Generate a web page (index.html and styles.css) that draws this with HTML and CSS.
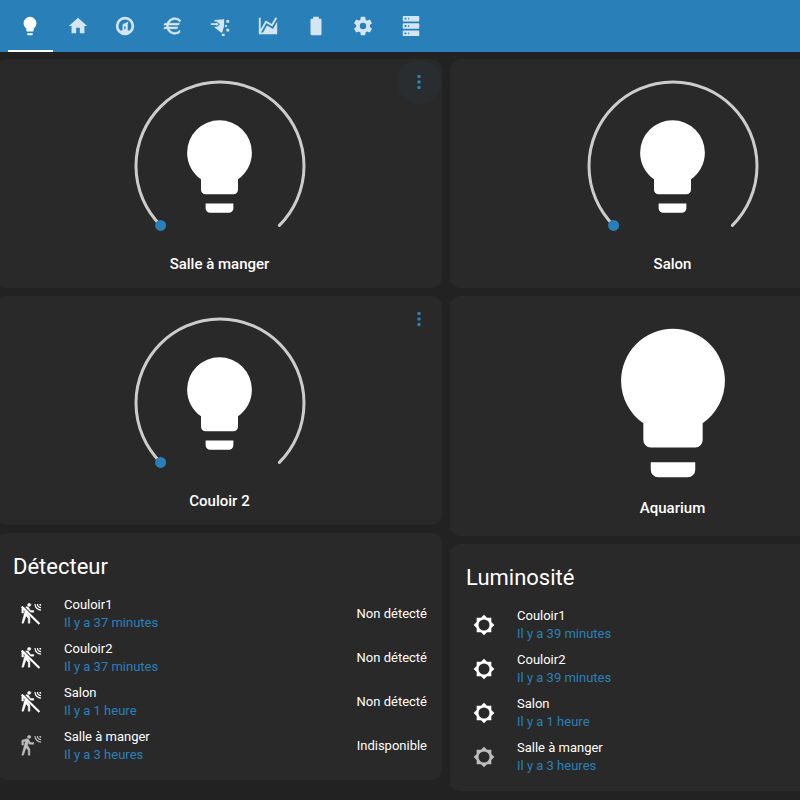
FILE: index.html
```
<!DOCTYPE html>
<html lang="fr">
<head>
<meta charset="utf-8">
<title>Maison</title>
<link rel="stylesheet" href="styles.css">
</head>
<body>
<svg class="defs" aria-hidden="true">
  <symbol id="bulb" viewBox="0 0 24 24"><path d="M12,2A7,7 0 0,0 5,9C5,11.38 6.19,13.47 8,14.74V17A1,1 0 0,0 9,18H15A1,1 0 0,0 16,17V14.74C17.81,13.47 19,11.38 19,9A7,7 0 0,0 12,2M9,21A1,1 0 0,0 10,22H14A1,1 0 0,0 15,21V20H9V21Z"/></symbol>
  <symbol id="dots" viewBox="0 0 24 24"><path d="M12,16A2,2 0 1,1 12,20A2,2 0 1,1 12,16M12,10A2,2 0 1,1 12,14A2,2 0 1,1 12,10M12,4A2,2 0 1,1 12,8A2,2 0 1,1 12,4Z"/></symbol>
  <symbol id="sun" viewBox="0 0 24 24"><path d="M12,18A6,6 0 0,1 6,12A6,6 0 0,1 12,6A6,6 0 0,1 18,12A6,6 0 0,1 12,18M20,15.31L23.31,12L20,8.69V4H15.31L12,0.69L8.69,4H4V8.69L0.69,12L4,15.31V20H8.69L12,23.31L15.31,20H20V15.31Z"/></symbol>
  <symbol id="motion" viewBox="0 0 24 24"><path class="walker" d="M10,0.2C9,0.2 8.2,1 8.2,2C8.2,3 9,3.8 10,3.8C11,3.8 11.8,3 11.8,2C11.8,1 11,0.2 10,0.2M7.92,4.03C7.75,4.03 7.58,4.06 7.42,4.11L2,5.8V11H3.8V7.33L5.91,6.67L2,22H3.8L6.67,13.89L9,17V22H10.8V15.59L8.31,11.05L9.04,8.18L10.12,10H15V8.2H11.38L9.38,4.87C9.08,4.37 8.54,4.03 7.92,4.03Z"/><path d="M15.67,1A7.33,7.33 0 0,0 23,8.33V7A6,6 0 0,1 17,1H15.67M18.33,1C18.33,3.58 20.42,5.67 23,5.67V4.33C21.16,4.33 19.67,2.84 19.67,1H18.33M21,1A2,2 0 0,0 23,3V1H21Z"/></symbol>
  <symbol id="motion-off" viewBox="0 0 24 24"><use href="#motion"/><path d="M3.4,2.2L22.4,20.9L21.6,21.7L2.6,3Z" class="gap"/><path d="M2.6,2.9L22,22.1L20.4,23.7L1,4.5Z"/></symbol>
  <symbol id="dial" viewBox="0 0 172 172"><path d="M26.6,145.4A84,84 0 1,1 145.4,145.4" class="arc"/><circle cx="26.6" cy="145.4" r="5.5" class="knob"/></symbol>
</svg>

<nav class="bar" aria-label="Vues">
  <div class="tabs">
    <a class="tab active" href="#lumieres" aria-label="Lumières" aria-current="page"><svg><use href="#bulb"/></svg></a>
    <a class="tab" href="#accueil" aria-label="Accueil"><svg viewBox="0 0 24 24"><path d="M10,20V14H14V20H19V12H22L12,3L2,12H5V20H10Z"/></svg></a>
    <a class="tab" href="#robot" aria-label="Aspirateur"><svg viewBox="0 0 24 24"><path fill-rule="evenodd" d="M12,2A10,10 0 1,1 12,22A10,10 0 1,1 12,2M12,5A7,7 0 0,0 7,16.9H9.3V12A3,3 0 0,1 12.6,9L15,7.4L15.6,8L14.8,10.6A3,3 0 0,1 15,12V16.9H17A7,7 0 0,0 12,5M11.2,12.2V15.5H12.6V12.2Z"/></svg></a>
    <a class="tab" href="#energie" aria-label="Énergie"><svg viewBox="0 0 24 24"><path class="bold" d="M7.07,11L7,12L7.07,13H17.35L16.5,15H7.67C8.8,17.36 11.21,19 14,19C16.23,19 18.22,17.96 19.5,16.33V19.12C18,20.3 16.07,21 14,21C10.08,21 6.75,18.5 5.5,15H2L3,13H5.05L5,12L5.05,11H2L3,9H5.5C6.75,5.5 10.08,3 14,3C16.5,3 18.8,4.04 20.43,5.71L19.57,7.75C18.29,6.08 16.27,5 14,5C11.21,5 8.8,6.64 7.67,9H19.04L18.19,11H7.07Z"/></svg></a>
    <a class="tab" href="#arrosage" aria-label="Arrosage"><svg viewBox="0 0 24 24"><path d="M6,5.5L16.5,4.5V12L14.5,19H13L5.5,13L9.5,12.5L12,10L8.5,7H6ZM2,9H8.2V8L10.5,10L8.2,12V11H2ZM19,5.5H22V8.5H19ZM17.5,11H19.5V13H17.5ZM19,15H22V18H19ZM14,20.5H17V23H14Z"/></svg></a>
    <a class="tab" href="#graphiques" aria-label="Graphiques"><svg viewBox="0 0 24 24"><path d="M17.45,15.18L22,7.31V21H2V3H4V15.54L9.5,6L16,9.78L20.24,2.45L21.97,3.45L16.74,12.5L10.23,8.75L4.31,19H6.57L10.96,11.44L17.45,15.18Z"/></svg></a>
    <a class="tab" href="#batteries" aria-label="Batteries"><svg viewBox="0 0 24 24"><path d="M16.67,4H15V2H9V4H7.33A1.33,1.33 0 0,0 6,5.33V20.67C6,21.4 6.6,22 7.33,22H16.67A1.33,1.33 0 0,0 18,20.67V5.33C18,4.6 17.4,4 16.67,4Z"/></svg></a>
    <a class="tab" href="#reglages" aria-label="Réglages"><svg viewBox="0 0 24 24"><path d="M12,15.5A3.5,3.5 0 0,1 8.5,12A3.5,3.5 0 0,1 12,8.5A3.5,3.5 0 0,1 15.5,12A3.5,3.5 0 0,1 12,15.5M19.43,12.97C19.47,12.65 19.5,12.33 19.5,12C19.5,11.67 19.47,11.34 19.43,11L21.54,9.37C21.73,9.22 21.78,8.95 21.66,8.73L19.66,5.27C19.54,5.05 19.27,4.96 19.05,5.05L16.56,6.05C16.04,5.66 15.5,5.32 14.87,5.07L14.5,2.42C14.46,2.18 14.25,2 14,2H10C9.75,2 9.54,2.18 9.5,2.42L9.13,5.07C8.5,5.32 7.96,5.66 7.44,6.05L4.95,5.05C4.73,4.96 4.46,5.05 4.34,5.27L2.34,8.73C2.21,8.95 2.27,9.22 2.46,9.37L4.57,11C4.53,11.34 4.5,11.67 4.5,12C4.5,12.33 4.53,12.65 4.57,12.97L2.46,14.63C2.27,14.78 2.21,15.05 2.34,15.27L4.34,18.73C4.46,18.95 4.73,19.03 4.95,18.95L7.44,17.94C7.96,18.34 8.5,18.68 9.13,18.93L9.5,21.58C9.54,21.82 9.75,22 10,22H14C14.25,22 14.46,21.82 14.5,21.58L14.87,18.93C15.5,18.67 16.04,18.34 16.56,17.94L19.05,18.95C19.27,19.03 19.54,18.95 19.66,18.73L21.66,15.27C21.78,15.05 21.73,14.78 21.54,14.63L19.43,12.97Z"/></svg></a>
    <a class="tab" href="#serveur" aria-label="Serveur"><svg viewBox="0 0 24 24"><path fill-rule="evenodd" d="M4,1H20A1,1 0 0,1 21,2V6A1,1 0 0,1 20,7H4A1,1 0 0,1 3,6V2A1,1 0 0,1 4,1M4,9H20A1,1 0 0,1 21,10V14A1,1 0 0,1 20,15H4A1,1 0 0,1 3,14V10A1,1 0 0,1 4,9M4,17H20A1,1 0 0,1 21,18V22A1,1 0 0,1 20,23H4A1,1 0 0,1 3,22V18A1,1 0 0,1 4,17M5,3V5H7V3H5M9,3V5H10V3H9M5,11V13H7V11H5M9,11V13H10V11H9M5,19V21H7V19H5M9,19V21H10V19H9Z"/></svg></a>
  </div>
</nav>

<main class="board">
  <div class="column">
    <section class="card light">
      <button class="more hovered" aria-label="Plus d'infos"><svg><use href="#dots"/></svg></button>
      <div class="dial"><svg class="ring"><use href="#dial"/></svg><svg class="lamp"><use href="#bulb"/></svg></div>
      <div class="name">Salle à manger</div>
    </section>
    <section class="card light">
      <button class="more" aria-label="Plus d'infos"><svg><use href="#dots"/></svg></button>
      <div class="dial"><svg class="ring"><use href="#dial"/></svg><svg class="lamp"><use href="#bulb"/></svg></div>
      <div class="name">Couloir 2</div>
    </section>
    <section class="card list">
      <h2>Détecteur</h2>
      <ul>
        <li><svg><use href="#motion-off"/></svg><div class="label">Couloir1<small>Il y a 37 minutes</small></div><span>Non détecté</span></li>
        <li><svg><use href="#motion-off"/></svg><div class="label">Couloir2<small>Il y a 37 minutes</small></div><span>Non détecté</span></li>
        <li><svg><use href="#motion-off"/></svg><div class="label">Salon<small>Il y a 1 heure</small></div><span>Non détecté</span></li>
        <li class="unavailable"><svg><use href="#motion"/></svg><div class="label">Salle à manger<small>Il y a 3 heures</small></div><span>Indisponible</span></li>
      </ul>
    </section>
  </div>
  <div class="column">
    <section class="card light">
      <div class="dial"><svg class="ring"><use href="#dial"/></svg><svg class="lamp"><use href="#bulb"/></svg></div>
      <div class="name">Salon</div>
    </section>
    <section class="card plain">
      <svg class="big-lamp"><use href="#bulb"/></svg>
      <div class="name">Aquarium</div>
    </section>
    <section class="card list">
      <h2>Luminosité</h2>
      <ul>
        <li><svg><use href="#sun"/></svg><div class="label">Couloir1<small>Il y a 39 minutes</small></div></li>
        <li><svg><use href="#sun"/></svg><div class="label">Couloir2<small>Il y a 39 minutes</small></div></li>
        <li><svg><use href="#sun"/></svg><div class="label">Salon<small>Il y a 1 heure</small></div></li>
        <li class="unavailable"><svg><use href="#sun"/></svg><div class="label">Salle à manger<small>Il y a 3 heures</small></div></li>
      </ul>
    </section>
  </div>
</main>
</body>
</html>
```
FILE: styles.css
```
* { box-sizing: border-box; }

body {
  margin: 0;
  overflow: hidden;
  background: #222222;
  color: #ffffff;
  font-family: Roboto, "Liberation Sans", sans-serif;
  font-size: 13px;
}

svg { display: block; fill: currentColor; }
.defs { position: absolute; width: 0; height: 0; }
.gap { fill: #292929; }
.walker, .bold { stroke: currentColor; stroke-width: 0.5; }
.arc { fill: none; stroke: #cccccc; stroke-width: 3; stroke-linecap: round; }
.knob { fill: #2980b9; }

.bar { padding-left: 8px; background: #2980b9; }
.tabs {
  display: grid;
  grid-template-columns: repeat(9, 1fr);
  gap: 3px;
  max-width: 425px;
  height: 52px;
}
.tab {
  display: grid;
  place-items: center;
  padding-top: 2px;
  border-bottom: 2px solid transparent;
  color: rgba(255, 255, 255, 0.8);
}
.tab.active { border-color: #ffffff; color: #ffffff; }
.tab svg { width: 22px; height: 22px; }

.board {
  display: grid;
  grid-template-columns: 1fr 1fr;
  gap: 8px;
  margin: 7px -95px 0 -3px;
}
.column { display: flex; flex-direction: column; gap: 8px; }

.card { position: relative; border-radius: 10px; background: #292929; }

.light { padding: 21px 0 14px; }
.plain { padding: 18px 0; }
.dial { display: grid; justify-items: center; height: 172px; margin-bottom: 2px; }
.ring, .lamp { grid-area: 1 / 1; }
.ring { width: 172px; height: 172px; }
.lamp { width: 111px; height: 111px; margin-top: 31px; }
.big-lamp { width: 178px; height: 178px; margin: 0 auto 6px; }
.name { font-size: 15px; font-weight: 500; line-height: 20px; text-align: center; }

.more {
  position: absolute;
  top: 1px;
  right: 1px;
  display: grid;
  place-items: center;
  width: 44px;
  height: 44px;
  padding: 0;
  border: 0;
  border-radius: 50%;
  background: none;
  color: #2980b9;
}
.more.hovered { background: #292d2f; }
.more svg { width: 22px; height: 22px; }

.list { padding: 12px 15px 16px 16px; }
h2 { margin: 0 0 6px; font-size: 22px; font-weight: 400; line-height: 44px; }
ul { display: grid; gap: 7px; margin: 0; padding: 0; list-style: none; }
li { display: flex; align-items: center; height: 37px; padding-left: 7px; }
li svg { width: 22px; height: 22px; margin-right: 22px; }
.label { flex: 1; line-height: 18px; }
small { display: block; font-size: 13px; color: #2980b9; }
.unavailable svg { color: #bdbdbd; }
```
